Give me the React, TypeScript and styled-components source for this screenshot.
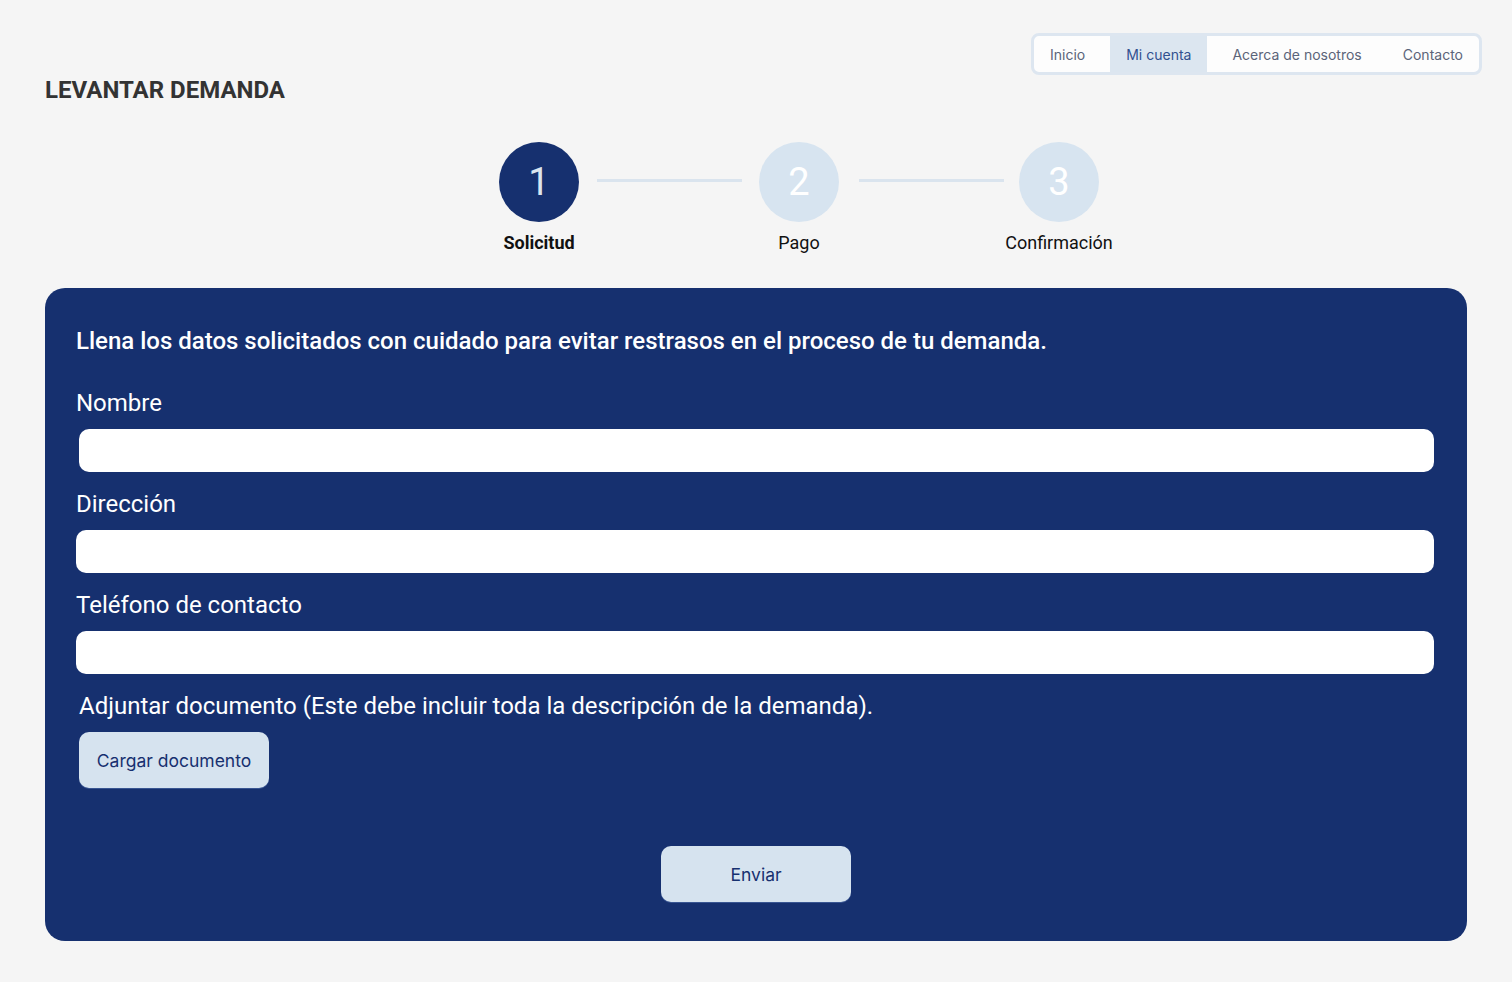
import React from "react";
import styled, { createGlobalStyle } from "styled-components";

const GlobalStyle = createGlobalStyle`
  html, body { margin: 0; padding: 0; background: #f5f5f5; }
  body { font-family: Roboto, "Noto Sans", sans-serif; }
  * { box-sizing: border-box; }
`;

const Page = styled.div`
  width: 1512px;
  min-height: 982px;
  padding: 33px 45px 41px 45px;
  display: flex;
  flex-direction: column;
`;

const Header = styled.header`
  display: flex;
  justify-content: space-between;
  align-items: flex-start;
  margin-right: -15px;
`;

const Title = styled.h1`
  margin: 43px 0 0 0;
  font-family: Roboto, sans-serif;
  font-size: 24px;
  line-height: 28px;
  font-weight: 700;
  color: #333333;
`;

const Nav = styled.nav`
  display: flex;
  gap: 9px;
  height: 42px;
  border: 3px solid #dde6f0;
  border-radius: 8px;
  background: #fdfdfd;
  overflow: hidden;
`;

const Tab = styled.a<{ $active?: boolean }>`
  display: flex;
  align-items: center;
  padding: 0 16px;
  font-family: Inter, sans-serif;
  font-size: 14px;
  color: ${(p) => (p.$active ? "#32508f" : "#5b6479")};
  background: ${(p) => (p.$active ? "#dce6f0" : "transparent")};
  text-decoration: none;
  cursor: pointer;
`;

const Stepper = styled.div`
  display: flex;
  align-items: flex-start;
  margin: 38px 0 0 454px;
`;

const Step = styled.div`
  width: 80px;
  display: flex;
  flex-direction: column;
  align-items: center;
`;

const Circle = styled.div<{ $active?: boolean }>`
  width: 80px;
  height: 80px;
  border-radius: 50%;
  display: flex;
  align-items: center;
  justify-content: center;
  background: ${(p) => (p.$active ? "#16306f" : "#d7e4f0")};
  color: ${(p) => (p.$active ? "#dbe5ef" : "#ffffff")};
  font-family: Roboto, sans-serif;
  font-size: 38px;
  font-weight: 400;
`;

const StepLabel = styled.div<{ $active?: boolean }>`
  margin-top: 10px;
  white-space: nowrap;
  font-family: Roboto, sans-serif;
  font-size: 18px;
  line-height: 22px;
  font-weight: ${(p) => (p.$active ? 700 : 400)};
  color: #111111;
`;

const Connector = styled.div<{ $left: number; $right: number }>`
  width: 145px;
  height: 3px;
  margin: 37px ${(p) => p.$right}px 0 ${(p) => p.$left}px;
  background: #dae4ee;
`;

const Card = styled.main`
  margin-top: 34px;
  background: #16306f;
  border-radius: 20px;
  padding: 39px 33px 39px 31px;
  display: flex;
  flex-direction: column;
`;

const Intro = styled.p`
  margin: 0 0 34px 0;
  font-family: Roboto, sans-serif;
  font-size: 24px;
  line-height: 28px;
  font-weight: 500;
  color: #ffffff;
`;

const Field = styled.div`
  display: flex;
  flex-direction: column;
  gap: 12px;
  margin-bottom: 18px;
`;

const Label = styled.label<{ $indent?: number }>`
  margin-left: ${(p) => p.$indent ?? 0}px;
  font-family: Roboto, sans-serif;
  font-size: 24px;
  line-height: 28px;
  color: #ffffff;
`;

const Input = styled.input<{ $indent?: number }>`
  margin-left: ${(p) => p.$indent ?? 0}px;
  height: 43px;
  border: none;
  border-radius: 10px;
  background: #ffffff;
  outline: none;
  padding: 0 14px;
  font-size: 18px;
`;

const Button = styled.button<{ $indent?: number }>`
  width: 190px;
  height: 56px;
  margin-left: ${(p) => p.$indent ?? 0}px;
  border: none;
  border-radius: 10px;
  background: #d6e3ef;
  color: #17306f;
  font-family: Inter, sans-serif;
  font-size: 17.5px;
  cursor: pointer;
  box-shadow: 0 1px 0 rgba(80, 110, 170, 0.6);
`;

const Actions = styled.div`
  display: flex;
  justify-content: center;
  margin-top: 58px;
  padding-left: 2px;
`;

const UploadGroup = styled.div`
  display: flex;
  flex-direction: column;
  align-items: flex-start;
  gap: 12px;
`;

export default function App() {
  return (
    <>
      <GlobalStyle />
      <Page>
        <Header>
          <Title>LEVANTAR DEMANDA</Title>
          <Nav>
            <Tab>Inicio</Tab>
            <Tab $active>Mi cuenta</Tab>
            <Tab>Acerca de nosotros</Tab>
            <Tab>Contacto</Tab>
          </Nav>
        </Header>

        <Stepper>
          <Step>
            <Circle $active>1</Circle>
            <StepLabel $active>Solicitud</StepLabel>
          </Step>
          <Connector $left={18} $right={17} />
          <Step>
            <Circle>2</Circle>
            <StepLabel>Pago</StepLabel>
          </Step>
          <Connector $left={20} $right={15} />
          <Step>
            <Circle>3</Circle>
            <StepLabel>Confirmación</StepLabel>
          </Step>
        </Stepper>

        <Card>
          <Intro>
            Llena los datos solicitados con cuidado para evitar restrasos en el proceso de tu demanda.
          </Intro>
          <Field>
            <Label>Nombre</Label>
            <Input $indent={3} />
          </Field>
          <Field>
            <Label>Dirección</Label>
            <Input />
          </Field>
          <Field>
            <Label>Teléfono de contacto</Label>
            <Input />
          </Field>
          <UploadGroup>
            <Label $indent={3}>
              Adjuntar documento (Este debe incluir toda la descripción de la demanda).
            </Label>
            <Button $indent={3}>Cargar documento</Button>
          </UploadGroup>
          <Actions>
            <Button>Enviar</Button>
          </Actions>
        </Card>
      </Page>
    </>
  );
}
